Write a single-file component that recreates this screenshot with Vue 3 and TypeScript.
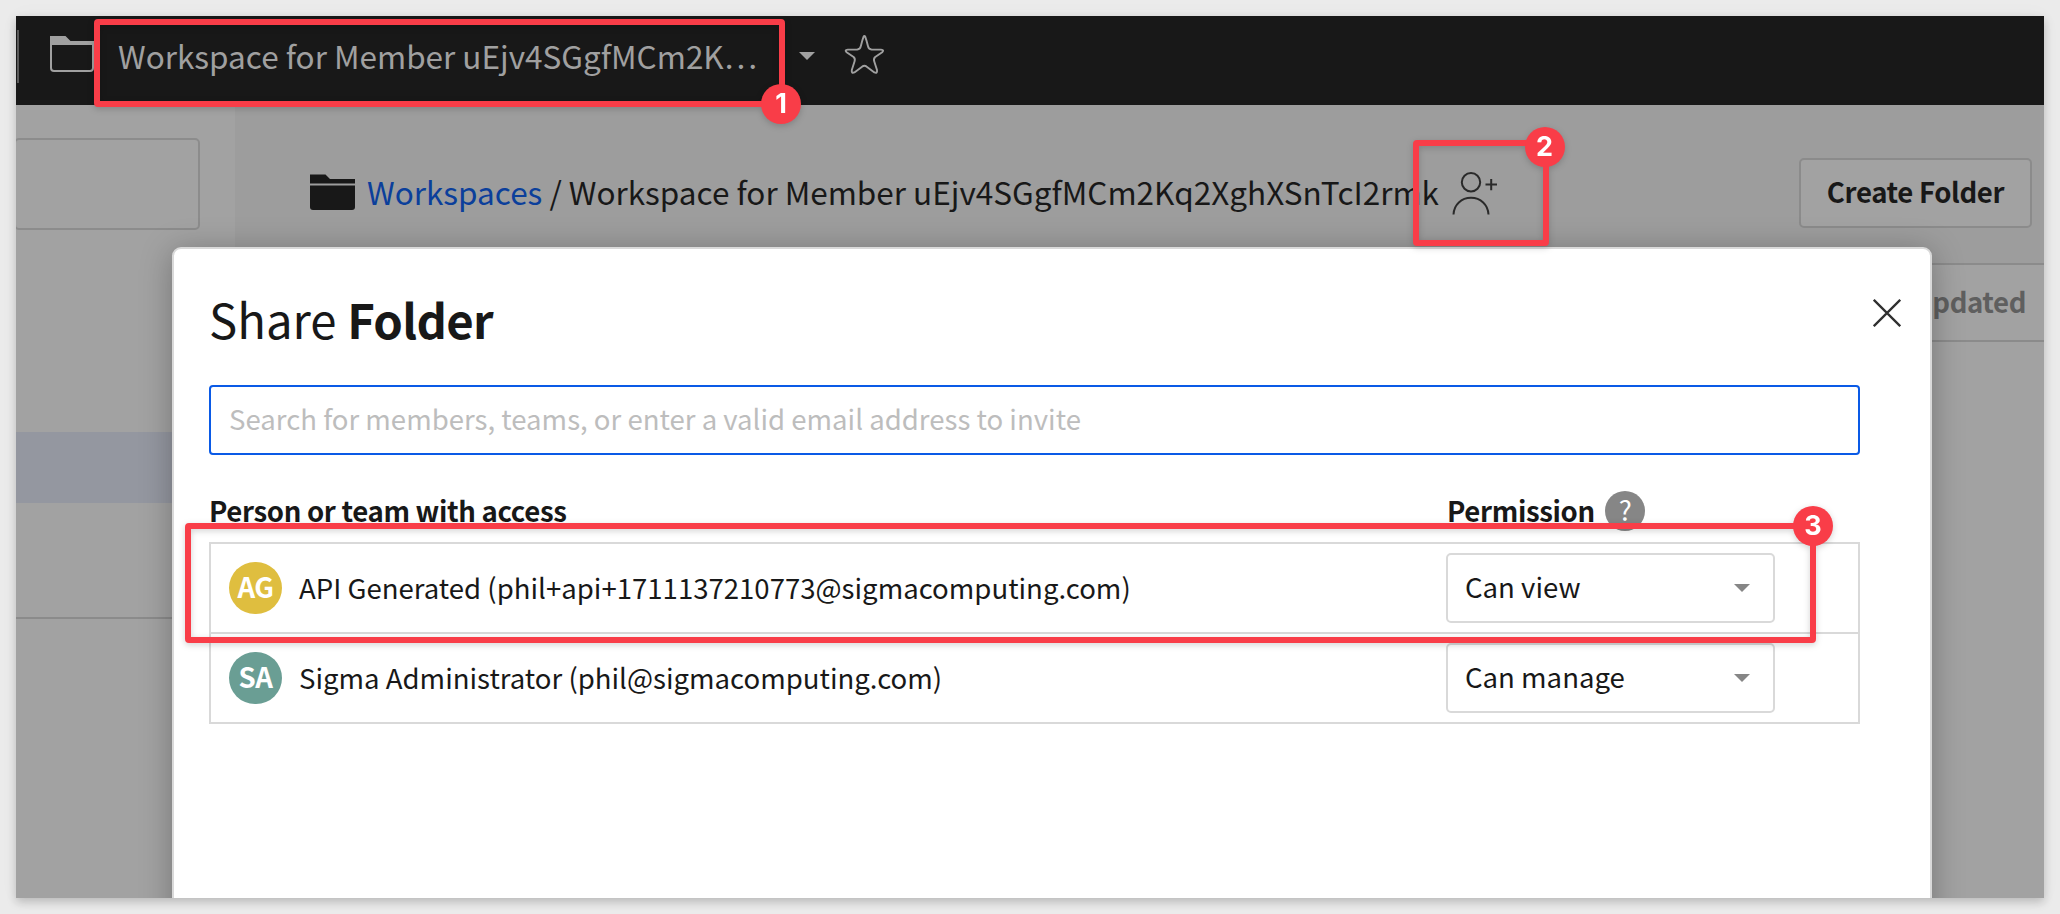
<script setup lang="ts">
interface Member {
  initials: string
  tone: string
  label: string
  permission: string
}

const members: Member[] = [
  {
    initials: 'AG',
    tone: 'gold',
    label: 'API Generated (phil+api+1711137210773@sigmacomputing.com)',
    permission: 'Can view',
  },
  {
    initials: 'SA',
    tone: 'teal',
    label: 'Sigma Administrator (phil@sigmacomputing.com)',
    permission: 'Can manage',
  },
]
</script>

<template>
  <div class="page">
    <div class="window">
      <header class="topbar">
        <span class="divider"></span>
        <svg class="bar-folder" width="46" height="38" viewBox="0 0 46 38">
          <path d="M0 10V1h15.5l5 5H44v4z" fill="#a0a0a0" />
          <path d="M1 9v24q0 3 3 3h36q3 0 3-3V9z" fill="none" stroke="#a0a0a0" stroke-width="2" />
        </svg>
        <span class="bar-title">Workspace for Member uEjv4SGgfMCm2K…</span>
        <svg class="bar-caret" width="16" height="8" viewBox="0 0 16 8"><path d="M0 0h16L8 8z" fill="#a0a0a0" /></svg>
        <svg class="star" width="42" height="42" viewBox="0 0 42 42">
          <path
            d="M20.6 2.6Q21.3 1.2 22.2 2.6Q23.5 6 25 12.2Q25.5 15.4 28.5 15.5L38 15.6Q41.6 16 39.2 18.2L32.2 23Q30.4 24.6 31.2 27.2L34 36Q34.5 39.8 31.4 38.4L23.4 32.4Q21.4 31.2 19.4 32.4L11.4 38.4Q8.3 39.8 8.8 36L11.6 27.2Q12.4 24.6 10.6 23L3.6 18.2Q1.2 16 4.8 15.6L14.3 15.5Q17.3 15.4 17.8 12.2Q19.3 6 20.6 2.6z"
            fill="none"
            stroke="#a0a0a0"
            stroke-width="1.9"
            stroke-linejoin="round"
          />
        </svg>
      </header>

      <div class="body">
        <aside class="sidebar">
          <div class="side-box"></div>
          <div class="side-selected"></div>
          <div class="side-rule"></div>
        </aside>
        <main class="main">
          <div class="main-head">
            <div class="crumbs">
              <svg class="crumb-folder" width="45" height="37" viewBox="0 0 45 37">
                <path d="M0 9.5V.5h15.5l4.500 4.500h25v4.500z" fill="#181818" />
                <path d="M0 11.500h45V33q0 3-3 3H3q-3 0-3-3z" fill="#181818" />
              </svg>
              <a class="link">Workspaces</a>
              <span class="slash">/</span>
              <span>Workspace for Member uEjv4SGgfMCm2Kq2XghXSnTcI2rmk</span>
              <svg class="person" width="46" height="44" viewBox="0 0 46 44">
                <g fill="none" stroke="#2a2a2a" stroke-width="2">
                  <circle cx="19" cy="11.3" r="9.2" />
                  <path d="M1.5 43.5C1.9 33.5 9.5 26.8 19 26.8S36.1 33.5 36.5 43.5M33.500 13.500h11.500M39.200 8v11.200" />
                </g>
              </svg>
            </div>
            <button class="create">Create Folder</button>
          </div>
          <div class="list-head">Updated</div>
        </main>
      </div>

      <section class="modal">
        <svg class="close" width="28" height="28" viewBox="0 0 28 28">
          <path d="M.8.8l26.400 26.400M27.200.8L.8 27.200" stroke="#303030" stroke-width="2.3" />
        </svg>
        <h1 class="heading">Share <b>Folder</b></h1>
        <div class="search">Search for members, teams, or enter a valid email address to invite</div>
        <div class="columns">
          <span class="col-name">Person or team with access</span>
          <span class="col-perm">
            <span class="col-label">Permission</span>
            <span class="help">?</span>
          </span>
        </div>
        <div class="table">
          <div v-for="m in members" :key="m.initials" class="row">
            <span class="avatar" :class="m.tone">{{ m.initials }}</span>
            <span class="name">{{ m.label }}</span>
            <div class="select">
              <span>{{ m.permission }}</span>
              <svg width="16" height="8" viewBox="0 0 16 8"><path d="M0 0h16L8 8z" fill="#868686" /></svg>
            </div>
          </div>
        </div>
      </section>
    </div>

    <div class="mark mark-1"><span class="badge">1</span></div>
    <div class="mark mark-2"><span class="badge">2</span></div>
    <div class="mark mark-3"><span class="badge">3</span></div>
  </div>
</template>

<style>
body {
  margin: 0;
}
</style>

<style scoped>
.page {
  position: relative;
  box-sizing: border-box;
  width: 2060px;
  height: 914px;
  padding: 16px;
  overflow: hidden;
  background: #ebebeb;
  color: #181818;
  font-family: 'Noto Sans CJK SC', 'Noto Sans', sans-serif;
  font-size: 27.57px;
  white-space: nowrap;
}
.page *,
.page *::before {
  box-sizing: border-box;
}
.page svg {
  display: block;
  flex: none;
}
.page::before {
  content: '';
  position: absolute;
  inset: 16px;
  box-shadow: 0 4px 9px rgba(0, 0, 0, 0.2), 0 0 20px rgba(0, 0, 0, 0.03);
}
.window {
  position: relative;
  display: flex;
  flex-direction: column;
  height: 882px;
  overflow: hidden;
  background: #a2a2a2;
}
.topbar {
  display: flex;
  align-items: center;
  flex: none;
  height: 89px;
  padding: 0 0 11px 1px;
  background: #181818;
  color: #a0a0a0;
  font-size: 31.5px;
}
.divider {
  width: 2px;
  height: 53px;
  margin-top: 3px;
  background: #5a5a5a;
}
.bar-folder {
  margin: -2px 0 0 31px;
}
.bar-title {
  width: 640px;
  margin-left: 22px;
  line-height: 48px;
}
.bar-caret {
  margin: 2px 0 0 41px;
}
.star {
  margin-left: 28px;
}
.body {
  display: flex;
  flex: 1;
}
.sidebar {
  width: 219px;
  padding-top: 33px;
}
.side-box {
  width: 186px;
  height: 92px;
  margin-left: -2px;
  border: 2px solid #8c8c8c;
  border-radius: 5px;
}
.side-selected {
  height: 71px;
  margin-top: 202px;
  background: #9497a0;
}
.side-rule {
  height: 2px;
  margin-top: 114px;
  background: #8b8b8b;
}
.main {
  flex: 1;
}
.main-head {
  display: flex;
  justify-content: space-between;
  align-items: center;
  height: 158px;
  padding: 18px 12px 0 75px;
  background: #9d9d9d;
}
.crumbs {
  display: flex;
  align-items: center;
  padding-bottom: 5px;
  font-size: 31.5px;
  line-height: 48px;
}
.crumb-folder {
  margin: 3px 12px 0 0;
}
.link {
  color: #0b3f9b;
}
.slash {
  margin: 0 7px 0 7px;
}
.person {
  margin: 5px 0 0 13px;
}
.create {
  width: 233px;
  height: 70px;
  padding: 0 0 4px;
  border: 2px solid #8b8b8b;
  border-radius: 5px;
  background: #a2a2a2;
  color: #181818;
  font: inherit;
  font-weight: 700;
  letter-spacing: -0.35px;
}
.list-head {
  height: 79px;
  padding-right: 18px;
  border: solid #8b8b8b;
  border-width: 2px 0;
  background: #a2a2a2;
  color: #5f5f5f;
  font-weight: 700;
  letter-spacing: -0.4px;
  line-height: 72px;
  text-align: right;
}
.modal {
  position: absolute;
  top: 231px;
  left: 156px;
  width: 1760px;
  height: 760px;
  padding: 39px 70px 0 35px;
  border: 2px solid #d9d9d9;
  border-radius: 9px;
  background: #fff;
  box-shadow: 0 4px 32px rgba(0, 0, 0, 0.28);
}
.close {
  position: absolute;
  top: 49.5px;
  right: 29.5px;
}
.heading {
  margin: 0 0 36px;
  font-size: 47.3px;
  font-weight: 400;
  line-height: 61px;
}
.heading b {
  letter-spacing: -0.65px;
}
.search {
  height: 70px;
  padding-left: 18px;
  border: 2px solid #0a5ae6;
  border-radius: 4px;
  color: #bdbdbd;
  line-height: 62px;
}
.columns {
  display: flex;
  justify-content: space-between;
  height: 44px;
  margin: 34px 0 9px;
  font-weight: 700;
  letter-spacing: -0.34px;
  line-height: 43px;
}
.col-perm {
  display: flex;
  width: 413px;
}
.col-label {
  width: 158px;
}
.help {
  width: 40px;
  height: 40px;
  margin-top: 2px;
  border-radius: 50%;
  background: #868686;
  color: #fff;
  font-weight: 400;
  line-height: 37px;
  text-align: center;
}
.table {
  border: solid #d9d9d9;
  border-width: 2px 2px 0;
}
.row {
  display: flex;
  align-items: center;
  height: 90px;
  padding: 0 83px 0 18px;
  border-bottom: 2px solid #d9d9d9;
}
.avatar {
  width: 53px;
  height: 52px;
  border-radius: 26px;
  color: #fff;
  font-weight: 700;
  letter-spacing: -0.5px;
  line-height: 48px;
  text-align: center;
}
.gold {
  background: #dfbe3f;
}
.teal {
  background: #6a9e94;
}
.name {
  flex: 1;
  margin-left: 17px;
  padding-bottom: 2px;
}
.select {
  display: flex;
  align-items: center;
  justify-content: space-between;
  width: 329px;
  height: 70px;
  padding: 0 23px 0 17px;
  border: 2px solid #d9d9d9;
  border-radius: 5px;
}
.select span {
  padding-bottom: 4px;
}
.mark {
  position: absolute;
  border: 6px solid #f93d48;
  border-radius: 4px;
  filter: drop-shadow(0 2px 3px rgba(0, 0, 0, 0.18));
}
.mark-1 {
  top: 19px;
  left: 94px;
  width: 691px;
  height: 88px;
}
.mark-2 {
  top: 140px;
  left: 1413px;
  width: 136px;
  height: 106px;
}
.mark-3 {
  top: 523px;
  left: 185px;
  width: 1631px;
  height: 120px;
}
.badge {
  position: absolute;
  top: -19px;
  right: -21.5px;
  width: 40px;
  height: 40px;
  border-radius: 50%;
  background: #f93d48;
  color: #fff;
  font: 700 27px/39px Inter, sans-serif;
  text-align: center;
}
.mark-1 .badge {
  top: 59px;
  right: -22px;
}
.mark-3 .badge {
  top: -23px;
  right: -23px;
}
</style>
